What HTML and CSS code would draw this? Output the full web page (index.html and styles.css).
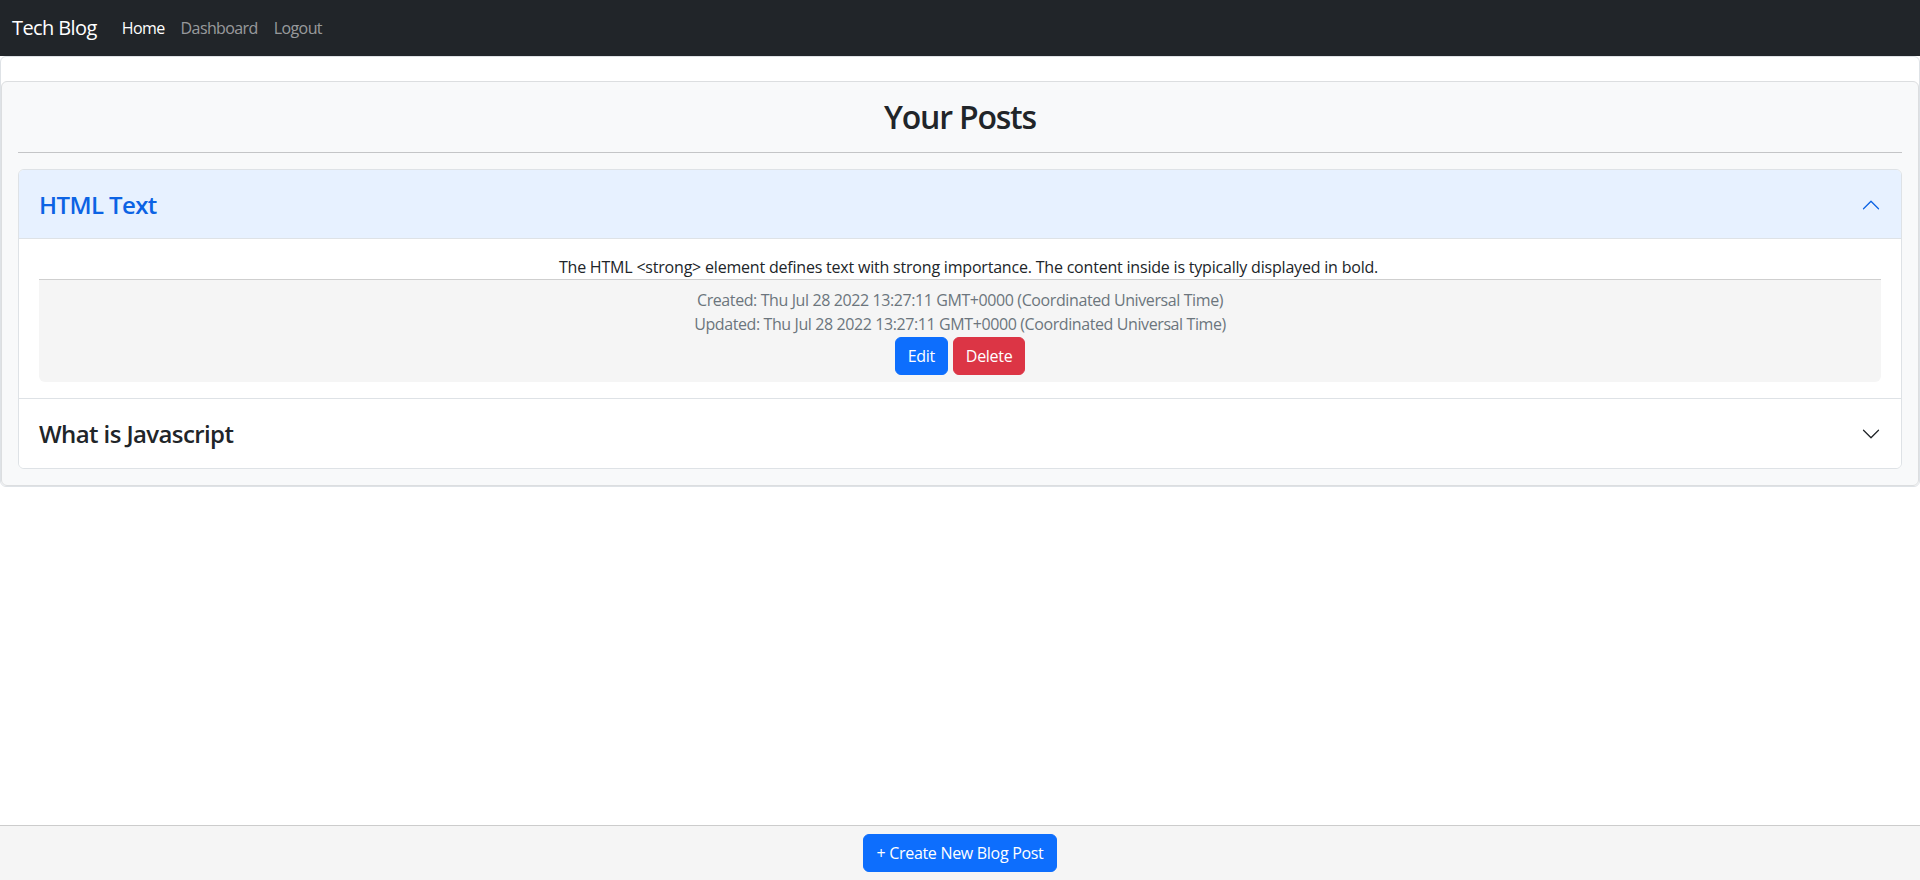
FILE: index.html
```html
<!DOCTYPE html>
<html lang="en">
<head>
<meta charset="utf-8">
<title>Tech Blog - Dashboard</title>
<link rel="stylesheet" href="styles.css">
</head>
<body>
<nav class="navbar">
  <a class="brand" href="#">Tech Blog</a>
  <ul class="nav-links">
    <li><a class="nav-link active" href="#">Home</a></li>
    <li><a class="nav-link" href="#">Dashboard</a></li>
    <li><a class="nav-link" href="#">Logout</a></li>
  </ul>
</nav>
<main class="main">
  <div class="outer-card">
    <section class="posts-card">
      <h2 class="posts-title">Your Posts</h2>
      <hr class="divider">
      <div class="accordion">
        <div class="acc-item">
          <h3 class="acc-header">
            <button class="acc-button open" type="button">
              <span class="acc-title">HTML Text</span>
              <svg class="chevron" viewBox="0 0 16 16" width="20" height="20"><path fill-rule="evenodd" d="M1.646 4.646a.5.5 0 0 1 .708 0L8 10.293l5.646-5.647a.5.5 0 0 1 .708.708l-6 6a.5.5 0 0 1-.708 0l-6-6a.5.5 0 0 1 0-.708z"/></svg>
            </button>
          </h3>
          <div class="acc-body">
            <p class="post-text">The HTML &lt;strong&gt; element defines text with strong importance. The content inside is typically displayed in bold.</p>
            <div class="post-meta">
              <div class="meta-line">Created: Thu Jul 28 2022 13:27:11 GMT+0000 (Coordinated Universal Time)</div>
              <div class="meta-line">Updated: Thu Jul 28 2022 13:27:11 GMT+0000 (Coordinated Universal Time)</div>
              <div class="actions">
                <button class="btn btn-primary" type="button">Edit</button>
                <button class="btn btn-danger" type="button">Delete</button>
              </div>
            </div>
          </div>
        </div>
        <div class="acc-item">
          <h3 class="acc-header">
            <button class="acc-button" type="button">
              <span class="acc-title">What is Javascript</span>
              <svg class="chevron" viewBox="0 0 16 16" width="20" height="20"><path fill-rule="evenodd" d="M1.646 4.646a.5.5 0 0 1 .708 0L8 10.293l5.646-5.647a.5.5 0 0 1 .708.708l-6 6a.5.5 0 0 1-.708 0l-6-6a.5.5 0 0 1 0-.708z"/></svg>
            </button>
          </h3>
        </div>
      </div>
    </section>
  </div>
</main>
<footer class="footer-bar">
  <button class="btn btn-primary" type="button">+ Create New Blog Post</button>
</footer>
</body>
</html>
```

FILE: styles.css
```css
* { box-sizing: border-box; }

html, body { height: 100%; }

body {
  margin: 0;
  min-height: 100vh;
  display: flex;
  flex-direction: column;
  font-family: "Open Sans", "Noto Sans", sans-serif;
  font-size: 16px;
  line-height: 1.5;
  letter-spacing: -0.2px;
  color: #212529;
  background: #fff;
}

.navbar {
  display: flex;
  align-items: center;
  height: 56px;
  padding: 8px 12px;
  background: #212529;
}

.brand {
  font-size: 20px;
  line-height: 30px;
  letter-spacing: -0.6px;
  color: #fff;
  text-decoration: none;
  margin-right: 17px;
}

.nav-links {
  display: flex;
  list-style: none;
  margin: 0;
  padding: 0;
}

.nav-link {
  display: block;
  padding: 8px 8px;
  letter-spacing: -0.6px;
  color: rgba(255, 255, 255, 0.55);
  text-decoration: none;
}

.nav-link.active { color: #fff; }

.main { flex: 1; }

.outer-card {
  border: 1px solid #dee2e6;
  border-radius: 6px;
  background: #fff;
  padding-top: 24px;
}

.posts-card {
  background: #f8f9fa;
  border: 1px solid #dcdee0;
  border-radius: 6px;
  padding: 16px 16px 16px;
}

.posts-title {
  margin: 0;
  text-align: center;
  font-size: 32px;
  font-weight: 600;
  letter-spacing: -1.2px;
  line-height: 1.2;
}

.divider {
  margin: 16px 0;
  border: 0;
  border-top: 1px solid #c4c5c7;
}

.accordion {
  border: 1px solid #dee2e6;
  border-radius: 6px;
  background: #fff;
  overflow: hidden;
}

.acc-item + .acc-item { border-top: 1px solid #dee2e6; }

.acc-header { margin: 0; }

.acc-button {
  display: flex;
  align-items: center;
  justify-content: space-between;
  width: 100%;
  height: 69px;
  padding: 16px 20px;
  border: 0;
  background: #fff;
  font: inherit;
  font-size: 24px;
  font-weight: 600;
  letter-spacing: -0.6px;
  line-height: 36px;
  color: #212529;
  text-align: left;
  cursor: pointer;
}

.acc-button.open {
  background: #e7f1ff;
  color: #0c63e4;
  box-shadow: inset 0 -1px 0 #dee2e6;
}

.chevron { fill: #212529; flex-shrink: 0; }
.acc-button.open .chevron { fill: #0c63e4; transform: rotate(180deg); }

.acc-body {
  padding: 16px 20px;
  text-align: center;
}

.post-text {
  margin: 0;
  padding-left: 17px;
}

.post-meta {
  border-top: 1px solid #cfcfcf;
  background: #f5f5f5;
  border-radius: 0 0 6px 6px;
  padding: 8px 0 7px;
  color: #6c757d;
}

.meta-line { letter-spacing: -0.4px; }

.actions {
  display: flex;
  justify-content: center;
  gap: 5px;
  margin-top: 1px;
}

.btn {
  font: inherit;
  font-size: 16px;
  line-height: 24px;
  letter-spacing: -0.3px;
  padding: 6px 12px;
  border: 1px solid transparent;
  border-radius: 6px;
  color: #fff;
  cursor: pointer;
}

.btn-primary { background: #0d6efd; border-color: #0d6efd; }
.btn-danger { background: #dc3545; border-color: #dc3545; }

.footer-bar {
  display: flex;
  justify-content: center;
  border-top: 1px solid #cccccc;
  background: #f5f5f5;
  padding: 8px;
}
```
